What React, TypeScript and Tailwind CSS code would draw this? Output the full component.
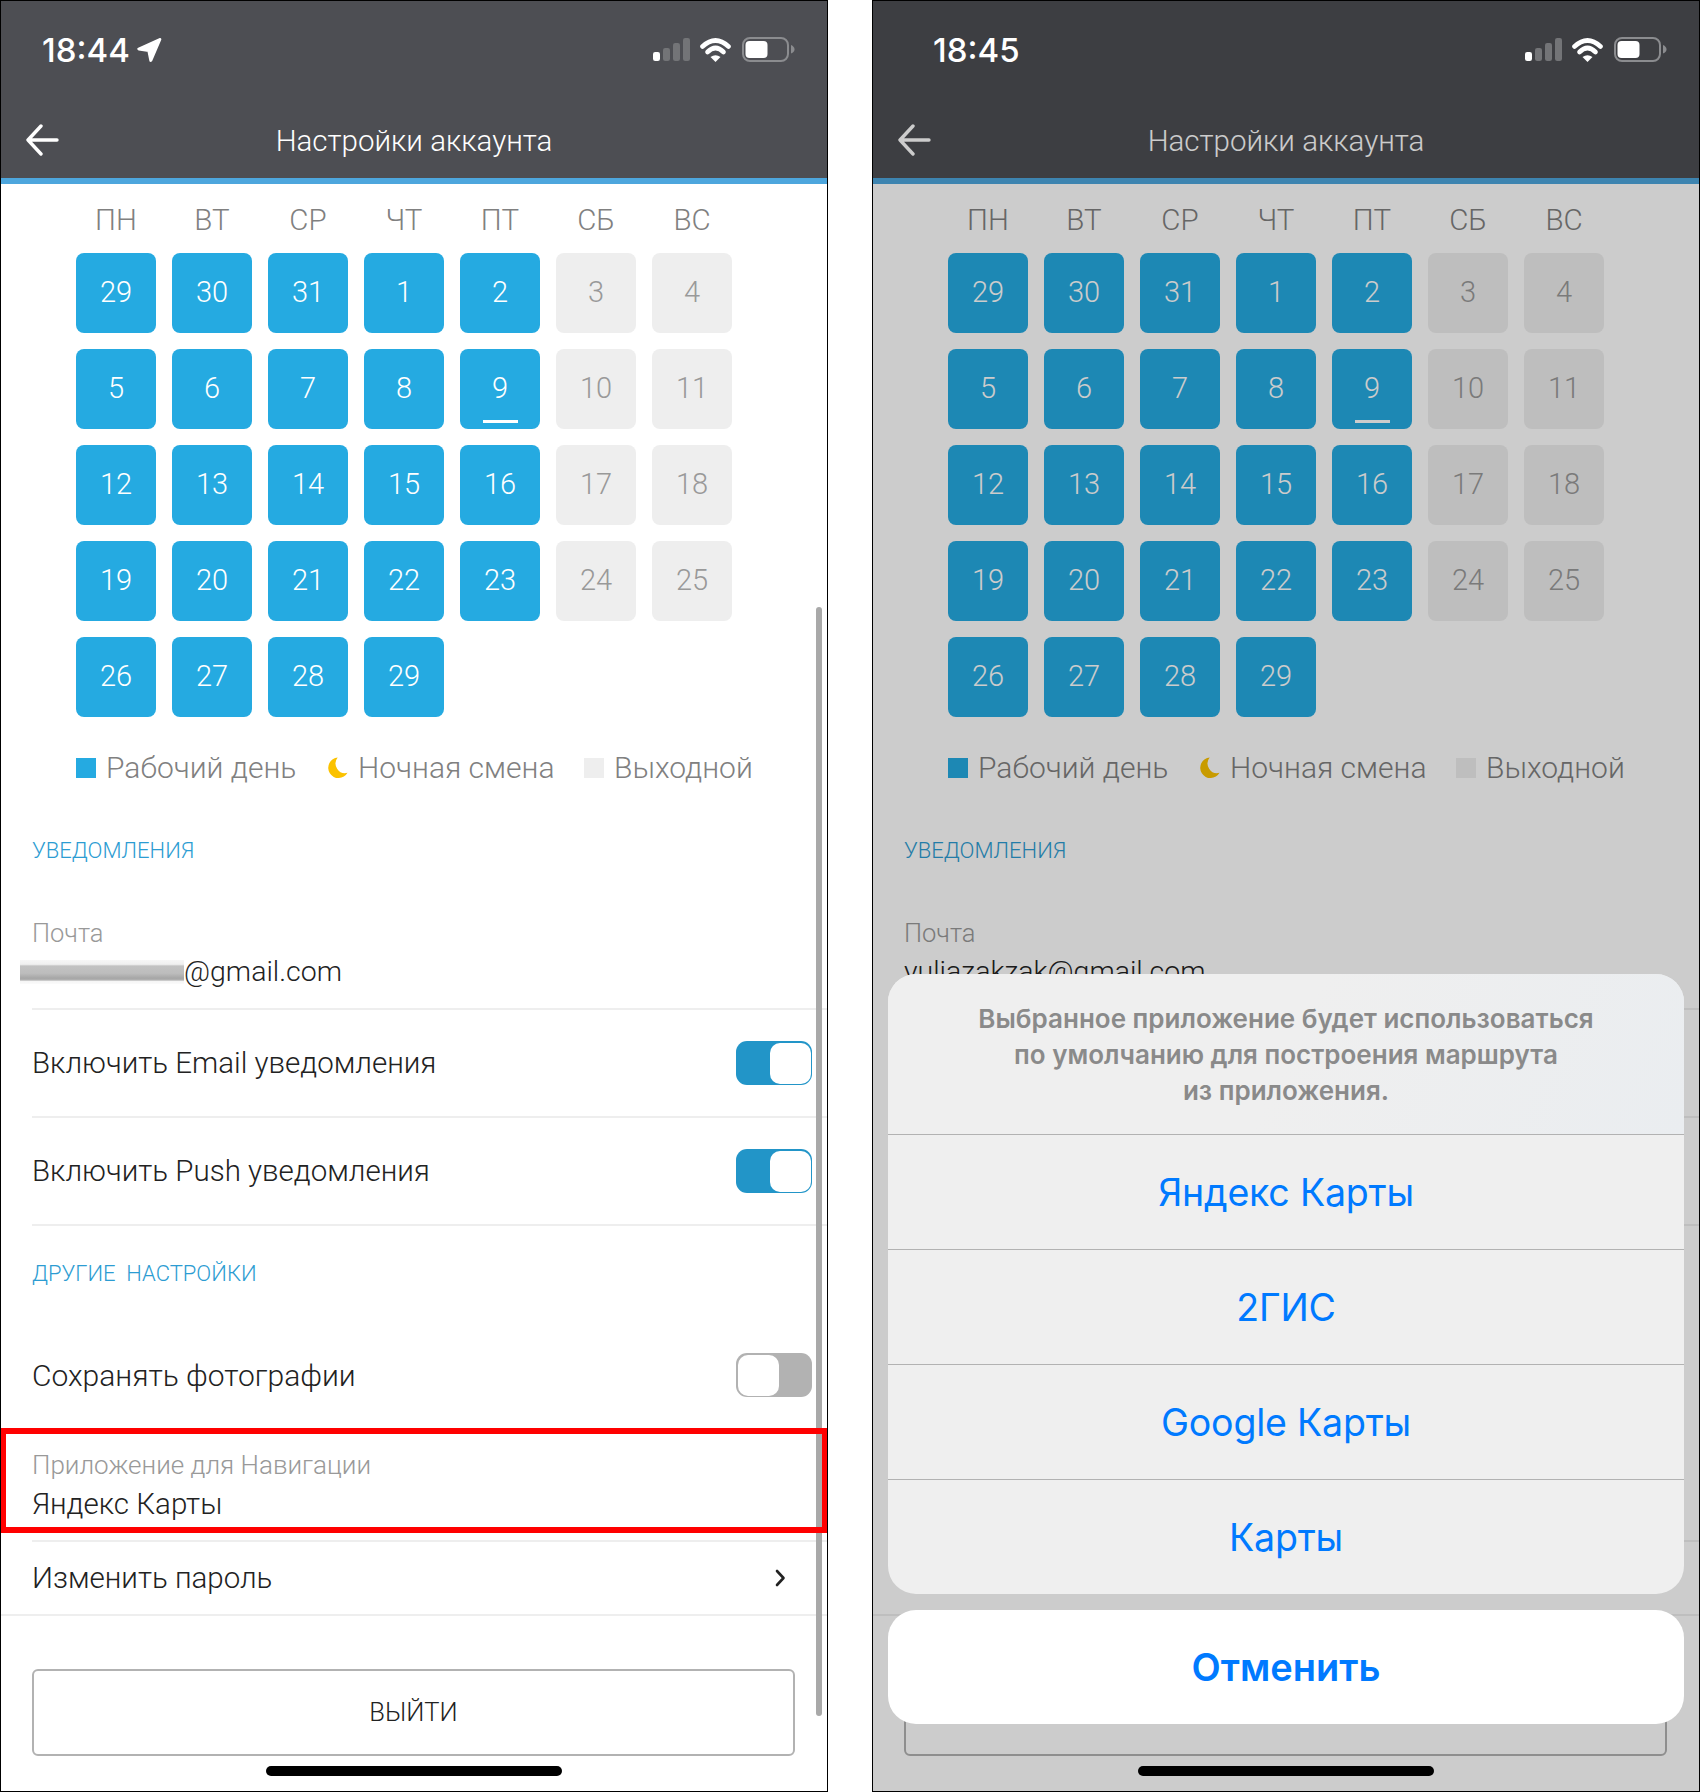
import React from "react";

const weeks: number[][] = [
  [29, 30, 31, 1, 2, 3, 4],
  [5, 6, 7, 8, 9, 10, 11],
  [12, 13, 14, 15, 16, 17, 18],
  [19, 20, 21, 22, 23, 24, 25],
  [26, 27, 28, 29],
];
const dayNames = ["ПН", "ВТ", "СР", "ЧТ", "ПТ", "СБ", "ВС"];

function LocationArrow() {
  return (
    <svg width="25" height="24" viewBox="0 0 25 24" className="ml-[7px]">
      <path d="M22.8 1.5 L1.8 11 L11.8 12.4 L13.8 22.4 Z" fill="#fff" stroke="#fff" strokeWidth="3" strokeLinejoin="round" />
    </svg>
  );
}

function StatusIcons() {
  return (
    <svg width="142" height="28" viewBox="0 0 142 28" className="block">
      <rect x="0" y="16" width="7" height="9" rx="2.2" fill="#fff" />
      <rect x="10" y="12" width="7" height="13" rx="2.2" fill="#737477" />
      <rect x="20" y="7" width="7" height="18" rx="2.2" fill="#737477" />
      <rect x="30" y="2" width="7" height="23" rx="2.2" fill="#737477" />
      <path d="M49.5 10.5 Q62.5 -1.5 75.5 10.5" stroke="#fff" strokeWidth="4.6" fill="none" strokeLinecap="round" />
      <path d="M54.5 16 Q62.5 8 70.5 16" stroke="#fff" strokeWidth="4.6" fill="none" strokeLinecap="round" />
      <path d="M57.5 21 L62.5 26 L67.5 21 Q62.5 17.5 57.5 21 Z" fill="#fff" />
      <rect x="90" y="2" width="45" height="23" rx="7" stroke="#8b8c8f" strokeWidth="2" fill="none" />
      <rect x="92.5" y="5" width="22" height="17" rx="4" fill="#fff" />
      <path d="M138 9 Q141.5 10.5 141.5 13.5 Q141.5 16 138 17.5 Z" fill="#8b8c8f" />
    </svg>
  );
}

function Toggle({ on }: { on: boolean }) {
  if (on) {
    return (
      <div className="ml-auto mr-[16px] flex h-[44px] w-[76px] justify-end rounded-[11px] bg-[#2295c8] p-[1.5px]">
        <div className="h-[41px] w-[41px] rounded-[10px] bg-white" />
      </div>
    );
  }
  return (
    <div className="ml-auto mr-[16px] flex h-[44px] w-[76px] justify-start rounded-[11px] bg-[#b2b2b2] p-[1.5px]">
      <div className="h-[41px] w-[41px] rounded-[10px] bg-white" />
    </div>
  );
}

function Phone({ second }: { second: boolean }) {
  return (
    <div className="relative h-[1792px] w-[828px] shrink-0 overflow-hidden bg-white font-['Roboto',sans-serif] font-light">
      <header className="h-[184px] border-b-[6px] border-[#4da6dd] bg-[#4d4e53]">
        <div className="relative z-20 flex h-[100px] items-center">
          <div className={second ? "ml-[61px] flex items-center" : "ml-[42px] flex items-center"}>
            <span className="font-['Inter',sans-serif] text-[33px] font-medium leading-none text-white">{second ? "18:45" : "18:44"}</span>
            {!second && <LocationArrow />}
          </div>
          <div className="absolute left-[653px] top-[36px]">
            <StatusIcons />
          </div>
        </div>
        <div className="relative flex h-[78px] items-center justify-center pt-[5px]">
          <svg width="34" height="32" viewBox="0 0 34 32" className="absolute left-[25px] top-[24px]" fill="none" stroke="#fff" strokeWidth="3.4" strokeLinecap="round" strokeLinejoin="round">
            <path d="M32 16 H3 M16 2 L3 16 L16 30" />
          </svg>
          <span className="text-[29.5px] leading-none text-white">Настройки аккаунта</span>
        </div>
      </header>

      <div className="ml-[76px] grid h-[69px] grid-cols-[repeat(7,80px)] items-center gap-x-4 pt-[5px]">
        {dayNames.map((d) => (
          <span key={d} className="text-center text-[29.5px] leading-none text-[#808080]">{d}</span>
        ))}
      </div>

      <div className="ml-[76px] grid grid-cols-[repeat(7,80px)] gap-4">
        {weeks.flatMap((week, w) =>
          week.map((n, i) => (
            <div
              key={`${w}-${i}`}
              className={
                i < 5
                  ? "relative flex h-[80px] items-center justify-center rounded-[8px] bg-[#25aae1] text-[29px] text-white"
                  : "flex h-[80px] items-center justify-center rounded-[8px] bg-[#eeeeee] text-[29px] text-[#999999]"
              }
            >
              {n}
              {w === 1 && i === 4 && <span className="absolute bottom-[6px] left-[23px] h-[3px] w-[35px] bg-white" />}
            </div>
          ))
        )}
      </div>

      <div className="ml-[76px] mt-[34px] flex h-[34px] items-center text-[30px] leading-none text-[#808080]">
        <div className="flex w-[251px] items-center gap-[10px]">
          <span className="h-[20px] w-[20px] bg-[#25aae1]" />
          <span>Рабочий день</span>
        </div>
        <div className="flex w-[257px] items-center gap-[10px]">
          <svg width="21" height="22" viewBox="0 0 21 22">
            <path d="M10.7 0.5 A10.3 10.3 0 1 0 20.5 15.8 A 9.6 9.6 0 0 1 10.7 0.5 Z" fill="#fbc200" />
          </svg>
          <span>Ночная смена</span>
        </div>
        <div className="flex items-center gap-[10px]">
          <span className="h-[20px] w-[20px] bg-[#eeeeee]" />
          <span>Выходной</span>
        </div>
      </div>

      <div className="ml-8 mt-[50px] flex h-[30px] items-center text-[22px] text-[#2c9cd2]">УВЕДОМЛЕНИЯ</div>

      <div className="ml-8 mt-[53px] flex h-[30px] items-center text-[25.5px] text-[#999999]">Почта</div>
      {second ? (
        <div className="ml-8 mt-[4px] flex h-[40px] items-center text-[28.5px] text-[#222222]">yuliazakzak@gmail.com</div>
      ) : (
        <div className="ml-[20px] mt-[4px] flex h-[40px] items-center text-[28.5px] text-[#222222]">
          <span className="h-[24px] w-[164px] bg-[linear-gradient(180deg,#f6f6f6_0%,#f0f0f0_18%,#c2c2c2_25%,#bdbdbd_55%,#a6a6a6_76%,#b4b4b4_84%,#f5f5f5_88%,#fbfbfb_100%)]" />
          <span>@gmail.com</span>
        </div>
      )}
      <div className="ml-8 mt-[16px] h-[2px] bg-[#eeeeee]" />

      <div className="ml-8 flex h-[108px] items-center border-b-2 border-[#eeeeee] text-[29.5px] text-[#222222]">
        <span>Включить Email уведомления</span>
        <Toggle on />
      </div>
      <div className="ml-8 flex h-[108px] items-center border-b-2 border-[#eeeeee] text-[29.5px] text-[#222222]">
        <span>Включить Push уведомления</span>
        <Toggle on />
      </div>

      <div className="ml-8 mt-[32px] flex h-[30px] items-center whitespace-pre text-[22px] text-[#2c9cd2]">ДРУГИЕ  НАСТРОЙКИ</div>

      <div className="ml-8 mt-[65px] flex h-[44px] items-center text-[30px] text-[#222222]">
        <span>Сохранять фотографии</span>
        <Toggle on={false} />
      </div>

      <div className="ml-8 mt-[53px] flex h-[30px] items-center text-[26px] text-[#999999]">Приложение для Навигации</div>
      <div className="ml-8 mt-[4px] flex h-[40px] items-center text-[29.5px] text-[#222222]">Яндекс Карты</div>
      <div className="ml-8 mt-[16px] h-[2px] bg-[#eeeeee]" />

      <div className="flex h-[74px] items-center border-b-2 border-[#eeeeee] pl-8 text-[29.5px] text-[#222222]">
        <span>Изменить пароль</span>
        <svg width="12" height="18" viewBox="0 0 12 18" className="ml-auto mr-[42px]" fill="none" stroke="#222" strokeWidth="2.6" strokeLinecap="round" strokeLinejoin="round">
          <path d="M3 2 L9.5 9 L3 16" />
        </svg>
      </div>

      <div className="ml-8 mt-[53px] flex h-[87px] w-[763px] items-center justify-center rounded-[6px] border-2 border-[#b2b2b2] text-[25.5px] text-[#222222]">ВЫЙТИ</div>
      <div className="mx-auto mt-[10px] h-[10px] w-[296px] rounded-full bg-black" />

      {!second && (
        <>
          <div className="absolute left-[816px] top-[607px] h-[1109px] w-[6px] rounded-full bg-[#a9a9a9]" />
          <div className="absolute left-0 top-[1428px] h-[105px] w-[828px] border-[6px] border-[#ff0000]" />
        </>
      )}

      {second && (
        <>
          <div className="absolute inset-0 z-10 bg-black/20" />
          <div className="absolute left-[16px] top-[974px] z-20 w-[796px] overflow-hidden rounded-[28px] bg-[#efefef] font-['Inter',sans-serif] font-normal">
            <div className="flex h-[160px] flex-col items-center justify-center bg-[linear-gradient(115deg,#efefef_50%,#eaedf0_100%)] pt-[2px] text-center text-[26px] font-semibold leading-[36px] text-[#8a8a8a]">
              <span>Выбранное приложение будет использоваться</span>
              <span>по умолчанию для построения маршрута</span>
              <span>из приложения.</span>
            </div>
            {["Яндекс Карты", "2ГИС", "Google Карты", "Карты"].map((t) => (
              <div key={t} className="flex h-[115px] items-center justify-center border-t border-[#b2b2b2] pt-[2px] text-[37.5px] tracking-[-0.2px] text-[#007aff]">{t}</div>
            ))}
          </div>
          <div className="absolute left-[16px] top-[1610px] z-20 flex h-[114px] w-[796px] items-center justify-center rounded-[28px] bg-white font-['Inter',sans-serif] text-[38px] font-semibold text-[#007aff]">Отменить</div>
        </>
      )}

      <div className="pointer-events-none absolute inset-0 z-30 border border-black" />
    </div>
  );
}

export default function App() {
  return (
    <div className="flex h-[1792px] w-[1700px] gap-[44px] bg-white">
      <Phone second={false} />
      <Phone second />
    </div>
  );
}
